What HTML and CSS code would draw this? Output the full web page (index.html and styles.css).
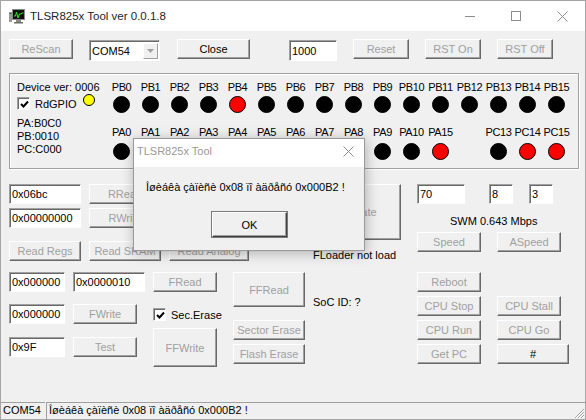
FILE: index.html
```html
<!DOCTYPE html>
<html lang="ru">
<head>
<meta charset="utf-8">
<title>TLSR825x Tool</title>
<link rel="stylesheet" href="styles.css">
</head>
<body>
<div class="window">
  <div class="titlebar">
    <svg class="appicon" width="16" height="16" viewBox="0 0 16 16">
      <rect x="0" y="4" width="3" height="10" fill="#9a9a9a"/>
      <rect x="0.5" y="5" width="2" height="1" fill="#2f7f2f"/>
      <rect x="3.5" y="1.5" width="12" height="10" fill="#101010" stroke="#8a8a8a"/>
      <polyline points="5,8 6.5,8 7.5,4 9,10 10.5,6 12,6 13,5 14.5,5" fill="none" stroke="#22ee22" stroke-width="1"/>
      <rect x="7" y="12" width="5" height="2" fill="#8a8a8a"/>
      <rect x="5" y="14" width="9" height="1.5" fill="#6a6a6a"/>
    </svg>
    <span class="title">TLSR825x Tool ver 0.0.1.8</span>
    <div class="caption">
      <span class="capbtn"><svg width="10" height="10" viewBox="0 0 10 10"><path d="M0 5.5H10" stroke="#8c8c8c" stroke-width="1"/></svg></span>
      <span class="capbtn"><svg width="10" height="10" viewBox="0 0 10 10"><rect x="0.5" y="0.5" width="9" height="9" fill="none" stroke="#8c8c8c"/></svg></span>
      <span class="capbtn"><svg width="11" height="11" viewBox="0 0 11 11"><path d="M0.5 0.5L10.5 10.5M10.5 0.5L0.5 10.5" stroke="#8c8c8c"/></svg></span>
    </div>
  </div>

  <div class="client">
    <div class="toolbar">
      <div class="btn dis w64">ReScan</div>
      <div class="combo">
        <span class="combo-text">COM54</span>
        <span class="combo-drop"><svg width="7" height="4" viewBox="0 0 7 4"><path d="M0 0H7L3.5 4Z" fill="#a0a0a0"/></svg></span>
      </div>
      <div class="btn w73 closebtn">Close</div>
      <div class="edit tbedit">1000</div>
      <div class="btn dis w56 ml16">Reset</div>
      <div class="btn dis w56 ml16">RST On</div>
      <div class="btn dis w56 ml16">RST Off</div>
    </div>

    <div class="group">
      <div class="devinfo">
        <div class="dv">Device ver: 0006</div>
        <div class="rd">
          <span class="chk"><svg width="9" height="9" viewBox="0 0 9 9"><path d="M1 4L3.5 6.5L8 1.5" fill="none" stroke="#000" stroke-width="2"/></svg></span>
          <span class="rdl">RdGPIO</span>
          <span class="led yel"></span>
        </div>
        <div class="pins">PA:B0C0<br>PB:0010<br>PC:C000</div>
      </div>
      <div class="gpio">
        <span class="lb r1">PB0</span><span class="lb r1">PB1</span><span class="lb r1">PB2</span><span class="lb r1">PB3</span>
        <span class="lb r1">PB4</span><span class="lb r1">PB5</span><span class="lb r1">PB6</span><span class="lb r1">PB7</span>
        <span class="lb r1">PB8</span><span class="lb r1">PB9</span><span class="lb r1">PB10</span><span class="lb r1">PB11</span>
        <span class="lb r1">PB12</span><span class="lb r1">PB13</span><span class="lb r1">PB14</span><span class="lb r1">PB15</span>

        <span class="led r2"></span><span class="led r2"></span><span class="led r2"></span><span class="led r2"></span>
        <span class="led r2 red"></span><span class="led r2"></span><span class="led r2"></span><span class="led r2"></span>
        <span class="led r2"></span><span class="led r2"></span><span class="led r2"></span><span class="led r2"></span>
        <span class="led r2"></span><span class="led r2"></span><span class="led r2"></span><span class="led r2"></span>

        <span class="lb r4">PA0</span><span class="lb r4">PA1</span><span class="lb r4">PA2</span><span class="lb r4">PA3</span>
        <span class="lb r4">PA4</span><span class="lb r4">PA5</span><span class="lb r4">PA6</span><span class="lb r4">PA7</span>
        <span class="lb r4">PA8</span><span class="lb r4">PA9</span><span class="lb r4">PA10</span><span class="lb r4">PA15</span>
        <span class="lb r4"></span><span class="lb r4">PC13</span><span class="lb r4">PC14</span><span class="lb r4">PC15</span>

        <span class="led r5"></span><span class="led r5"></span><span class="led r5"></span><span class="led r5"></span>
        <span class="led r5"></span><span class="led r5"></span><span class="led r5"></span><span class="led r5"></span>
        <span class="led r5"></span><span class="led r5"></span><span class="led r5"></span><span class="led r5 red"></span>
        <span class="slot r5"></span><span class="led r5"></span><span class="led r5 red"></span><span class="led r5 red"></span>
      </div>
    </div>

    <div class="secA">
      <div class="aleft">
        <div class="arow"><div class="edit w72">0x06bc</div><div class="btn dis w72">RRead</div></div>
        <div class="arow ar2"><div class="edit w72">0x00000000</div><div class="btn dis w72">RWrite</div></div>
        <div class="arow ar3"><div class="btn dis w72">Read Regs</div><div class="btn dis w72">Read SRAM</div><div class="btn dis w80">Read Analog</div></div>
      </div>
      <div class="acenter">
        <div class="btn dis big">Activate</div>
        <div class="note">FLoader not load</div>
      </div>
      <div class="aright">
        <div class="erow"><div class="edit w48">70</div><div class="edit w24 e8">8</div><div class="edit w24 e3">3</div></div>
        <div class="swm">SWM 0.643 Mbps</div>
        <div class="brow"><div class="btn dis w64">Speed</div><div class="btn dis w64 ml16">ASpeed</div></div>
      </div>
    </div>

    <div class="secB">
      <div class="b1">
        <div class="arow"><div class="edit w56">0x000000</div><div class="edit w72">0x0000010</div></div>
        <div class="arow br2"><div class="edit w56">0x000000</div><div class="btn dis w64">FWrite</div></div>
        <div class="arow br3"><div class="edit w56">0x9F</div><div class="btn dis w64">Test</div></div>
      </div>
      <div class="b2">
        <div class="btn dis w64">FRead</div>
        <div class="chkrow">
          <span class="chk"><svg width="9" height="9" viewBox="0 0 9 9"><path d="M1 4L3.5 6.5L8 1.5" fill="none" stroke="#000" stroke-width="2"/></svg></span>
          <span class="chkl">Sec.Erase</span>
        </div>
        <div class="btn dis w64 ffw">FFWrite</div>
      </div>
      <div class="b3">
        <div class="btn dis w72 ffr">FFRead</div>
        <div class="btn dis w72 se">Sector Erase</div>
        <div class="btn dis w72 fe">Flash Erase</div>
      </div>
      <div class="b4"><div class="soc">SoC ID: ?</div></div>
      <div class="b5">
        <div class="btn dis w64">Reboot</div>
        <div class="crow"><div class="btn dis w64">CPU Stop</div><div class="btn dis w64 ml16">CPU Stall</div></div>
        <div class="crow"><div class="btn dis w64">CPU Run</div><div class="btn dis w64 ml16">CPU Go</div></div>
        <div class="crow"><div class="btn dis w64">Get PC</div><div class="btn w72 ml16">#</div></div>
      </div>
    </div>
  </div>

  <div class="statusbar">
    <div class="pane p1">COM54</div>
    <div class="pane p2">Îøèáêà çàïèñè 0x08 ïî àäðåñó 0x000B2 !</div>
    <svg class="grip" width="12" height="12" viewBox="0 0 12 12">
      <path d="M11 2L2 11M11 5L5 11M11 8L8 11" stroke="#a0a0a0" stroke-width="1"/>
      <path d="M11 3L3 11M11 6L6 11M11 9L9 11" stroke="#ffffff" stroke-width="1"/>
    </svg>
  </div>

  <div class="dialog">
    <div class="dtitle">
      <span class="dtext">TLSR825x Tool</span>
      <svg class="dclose" width="11" height="11" viewBox="0 0 11 11"><path d="M0.5 0.5L10.5 10.5M10.5 0.5L0.5 10.5" stroke="#8c8c8c"/></svg>
    </div>
    <div class="dbody">
      <div class="msg">Îøèáêà çàïèñè 0x08 ïî àäðåñó 0x000B2 !</div>
      <div class="btn okbtn">OK</div>
    </div>
  </div>
</div>
</body>
</html>
```

FILE: styles.css
```css
* { box-sizing: border-box; }
html, body { margin: 0; padding: 0; background: #fff; }
body {
  font-family: "Liberation Sans", Arial, sans-serif;
  font-size: 11px;
  line-height: 14px;
  color: #000;
}

.window {
  position: relative;
  width: 586px;
  height: 420px;
  border: 1px solid #a5a5a5;
  background: #f0f0f0;
  display: flex;
  flex-direction: column;
  overflow: hidden;
}

/* title bar */
.titlebar {
  flex: none;
  height: 30px;
  background: #fff;
  display: flex;
  align-items: center;
}
.appicon { flex: none; margin-left: 8px; }
.title { margin-left: 5px; font-size: 11.5px; color: #1e1e1e; }
.caption { margin-left: auto; display: flex; height: 30px; }
.capbtn {
  width: 46px;
  height: 30px;
  display: flex;
  align-items: center;
  justify-content: center;
}

/* client */
.client { flex: 1; padding: 8px 0 0 8px; }

/* common controls */
.btn {
  flex: none;
  display: flex;
  align-items: center;
  justify-content: center;
  height: 20px;
  background: #f0f0f0;
  border: 1px solid;
  border-color: #fff #696969 #696969 #fff;
  box-shadow: inset -1px -1px #a0a0a0;
  white-space: nowrap;
  overflow: hidden;
  color: #000;
}
.btn.dis { color: #a0a0a0; }
.edit {
  flex: none;
  height: 20px;
  background: #fff;
  border: 1px solid;
  border-color: #a0a0a0 #fff #fff #a0a0a0;
  box-shadow: inset 1px 1px #696969;
  padding: 0 0 0 2px;
  display: flex;
  align-items: center;
  white-space: nowrap;
  overflow: hidden;
}
.chk {
  flex: none;
  width: 13px;
  height: 13px;
  background: #fff;
  border: 1px solid;
  border-color: #a0a0a0 #fff #fff #a0a0a0;
  box-shadow: inset 1px 1px #696969;
  display: flex;
  align-items: center;
  justify-content: center;
  padding: 1px 0 0 1px;
}

.w24 { width: 24px; }
.w48 { width: 48px; }
.w56 { width: 56px; }
.w64 { width: 64px; }
.w72 { width: 72px; }
.w73 { width: 73px; }
.w80 { width: 80px; }
.ml16 { margin-left: 16px; }

/* toolbar */
.toolbar { display: flex; align-items: flex-start; height: 22px; }
.combo {
  flex: none;
  margin: 1px 0 0 16px;
  width: 71px;
  height: 21px;
  background: #fff;
  border: 1px solid;
  border-color: #a0a0a0 #fff #fff #a0a0a0;
  box-shadow: inset 1px 1px #696969;
  display: flex;
  align-items: center;
  padding: 0 1px 0 2px;
}
.combo-text { flex: 1; }
.combo-drop {
  width: 15px;
  height: 16px;
  margin-top: 1px;
  background: #f0f0f0;
  border: 1px solid;
  border-color: #fff #a0a0a0 #a0a0a0 #fff;
  display: flex;
  align-items: center;
  justify-content: center;
}
.closebtn { margin-left: 17px; }
.tbedit { width: 48px; height: 21px; margin: 1px 0 0 39px; }

/* GPIO group */
.group {
  margin-top: 12px;
  width: 570px;
  height: 96px;
  border: 1px solid #a0a0a0;
  box-shadow: inset 1px 1px #fff, 1px 1px #fff;
  display: flex;
  padding: 6px 0 0 7px;
}
.devinfo { width: 90px; flex: none; }
.dv { height: 14px; white-space: nowrap; }
.rd { height: 19px; display: flex; align-items: center; }
.rdl { width: 48px; margin-left: 5px; }
.pins { margin-top: 4px; line-height: 13px; }

.gpio {
  display: grid;
  grid-template-columns: repeat(16, 29px);
  grid-template-rows: 14px 19px 12px 14px 21px;
}
.lb { text-align: center; white-space: nowrap; letter-spacing: -0.4px; }
.r1 { grid-row: 1; }
.r2 { grid-row: 2; margin-top: 2px; }
.r4 { grid-row: 4; }
.r5 { grid-row: 5; margin-top: 4px; }
.led {
  justify-self: center;
  align-self: start;
  width: 17px;
  height: 17px;
  border-radius: 50%;
  background: #000;
  border: 1px solid #000;
}
.led.red { background: #ff0000; }
.led.yel { width: 12px; height: 12px; background: #ffff00; }
.slot { display: block; }

/* section A */
.secA { display: flex; margin-top: 15px; height: 78px; }
.aleft { width: 240px; flex: none; }
.arow { display: flex; gap: 8px; }
.ar2 { margin-top: 4px; }
.ar3 { margin-top: 13px; }
.acenter { margin-left: 64px; width: 88px; flex: none; }
.big { width: 88px; height: 56px; }
.note { margin-top: 8px; white-space: nowrap; }
.aright { margin-left: 16px; width: 152px; flex: none; }
.erow { display: flex; }
.e8 { margin-left: 24px; }
.e3 { margin-left: 16px; }
.swm { margin-top: 10px; padding-left: 33px; white-space: nowrap; }
.brow { display: flex; margin-top: 4px; }

/* section B */
.secB { display: flex; margin-top: 10px; }
.b1 { width: 136px; flex: none; }
.br2 { margin-top: 12px; }
.br3 { margin-top: 13px; }
.b2 { margin-left: 8px; width: 64px; flex: none; }
.chkrow { display: flex; align-items: center; height: 13px; margin-top: 16px; }
.chkl { margin-left: 5px; white-space: nowrap; }
.ffw { height: 39px; margin-top: 7px; }
.b3 { margin-left: 16px; width: 72px; flex: none; }
.ffr { height: 35px; }
.se { margin-top: 13px; }
.fe { margin-top: 4px; }
.b4 { margin-left: 8px; width: 88px; flex: none; }
.soc { margin-top: 23px; }
.b5 { margin-left: 16px; flex: none; }
.crow { display: flex; margin-top: 4px; }

/* status bar */
.statusbar {
  position: relative;
  flex: none;
  height: 18px;
  padding-top: 1px;
  display: flex;
}
.pane {
  height: 17px;
  border-top: 1px solid #a0a0a0;
  line-height: 15px;
  white-space: nowrap;
}
.p1 { width: 44px; padding-left: 2px; }
.p2 { flex: 1; margin-left: 1px; border-left: 1px solid #a0a0a0; padding-left: 2px; }
.grip { position: absolute; right: 0; bottom: 0; }

/* message dialog */
.dialog {
  position: absolute;
  left: 132px;
  top: 137px;
  width: 232px;
  height: 113px;
  border: 1px solid #9a9a9a;
  background: #f0f0f0;
  box-shadow: 1px 2px 12px rgba(0, 0, 0, 0.28);
  display: flex;
  flex-direction: column;
}
.dtitle {
  flex: none;
  height: 28px;
  background: #fff;
  display: flex;
  align-items: flex-start;
  padding: 5px 0 0 3px;
}
.dtext { color: #999; }
.dclose { margin: 2px 10px 0 auto; }
.dbody { padding: 13px 0 0 12px; }
.msg { white-space: nowrap; }
.okbtn {
  margin: 18px 0 0 66px;
  width: 75px;
  height: 25px;
  border-color: #fff #404040 #404040 #fff;
  box-shadow: inset -1px -1px #a0a0a0, 0 0 0 1px #7a7a7a;
}
```
